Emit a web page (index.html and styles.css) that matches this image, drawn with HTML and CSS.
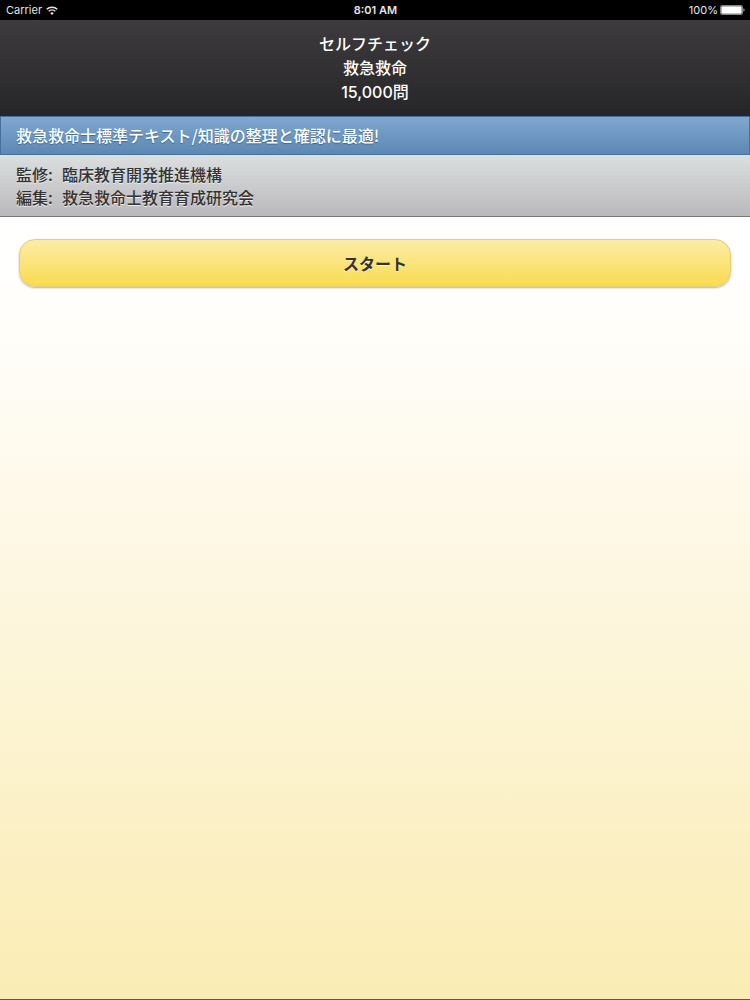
FILE: index.html
```html
<!DOCTYPE html>
<html lang="ja">
<head>
    <meta charset="UTF-8">
    <meta name="viewport" content="width=device-width, initial-scale=1.0">
    <title>セルフチェック 救急救命 15,000問</title>
    <link rel="stylesheet" href="styles.css">
</head>
<body>
    <div class="status-bar">
        <div class="carrier">
            <span>Carrier</span>
            <svg class="wifi" viewBox="0 0 12 9" width="12" height="9" aria-hidden="true">
                <path d="M0.7 3.3a7.6 7.6 0 0 1 10.6 0M2.7 5.3a4.8 4.8 0 0 1 6.6 0" fill="none" stroke="#e6e6e6" stroke-width="1.5"/>
                <path d="M6 9L4.1 7.1a2.7 2.7 0 0 1 3.8 0z" fill="#e6e6e6"/>
            </svg>
        </div>
        <div class="clock">8:01 AM</div>
        <div class="battery">
            <span>100%</span>
            <svg viewBox="0 0 25 10" width="25" height="10" aria-hidden="true">
                <rect x="0.5" y="0.5" width="22" height="9" rx="1.5" fill="#000" stroke="#bbb" stroke-width="0.7"/>
                <rect x="1.3" y="1.3" width="20.4" height="7.4" rx="0.8" fill="#fff"/>
                <path d="M23.5 3.3c1.3 0.5 1.3 2.9 0 3.4z" fill="#ddd"/>
            </svg>
        </div>
    </div>

    <header class="header">
        <h1>セルフチェック<br>救急救命<br>15,000問</h1>
    </header>

    <h2 class="bar">救急救命士標準テキスト/知識の整理と確認に最適!</h2>
    <div class="credits">
        <p><span class="label">監修:</span>臨床教育開発推進機構</p>
        <p><span class="label">編集:</span>救急救命士教育育成研究会</p>
    </div>

    <main class="content">
        <button type="button" class="start">スタート</button>
    </main>
</body>
</html>
```
FILE: styles.css
```css
* {
    box-sizing: border-box;
}
body {
    margin: 0;
    min-height: 100vh;
    display: flex;
    flex-direction: column;
    font-family: "Noto Sans CJK JP", sans-serif;
    font-size: 16px;
    font-weight: 500;
    color: #333;
    border-bottom: 1px solid #66583a;
}
h1, h2, p {
    margin: 0;
    font-size: 16px;
    font-weight: 500;
}

.status-bar {
    display: grid;
    grid-template-columns: 1fr auto 1fr;
    align-items: center;
    height: 20px;
    padding: 0 5px 0 6px;
    background: #000;
    color: #e6e6e6;
    font-family: Inter, sans-serif;
    font-size: 11px;
    font-weight: 400;
}
.carrier, .battery {
    display: flex;
    align-items: center;
    gap: 4px;
}
.battery {
    justify-content: flex-end;
    gap: 2px;
}
.clock {
    font-weight: 600;
}

.header {
    padding: 12px 16px;
    background: linear-gradient(#3d3b3e, #262528);
    color: #fff;
    text-align: center;
}
.header h1 {
    font-family: Inter, "Noto Sans CJK JP", sans-serif;
    line-height: 24px;
}

.bar {
    padding: 6px 15px;
    border: 1px solid #456f9c;
    background: linear-gradient(#81a8cf, #5b88b4);
    color: #fff;
    line-height: 25px;
    text-shadow: 0 1px 1px #3e6790;
}

.credits {
    padding: 8px 16px 7px;
    background: linear-gradient(#dbdfdf, #bab8bb);
    border-bottom: 1px solid #77757a;
    line-height: 23px;
    text-shadow: 0 1px 0 #eee;
}
.credits .label {
    display: inline-block;
    width: 46px;
}

.content {
    flex: 1;
    padding: 22px 19px;
    background: linear-gradient(#fff, #fffefa 14%, #fdf6de 50%, #faecb3);
}
.start {
    display: block;
    width: 100%;
    height: 48px;
    border: 1px solid #e3cf78;
    border-radius: 16px;
    background: linear-gradient(#fceda7, #fadb4f);
    box-shadow: 0 1px 2px rgba(0, 0, 0, 0.3);
    color: #333;
    font-family: inherit;
    font-size: 16px;
    font-weight: 700;
    text-shadow: 0 1px 0 #fff3b8;
}
```
